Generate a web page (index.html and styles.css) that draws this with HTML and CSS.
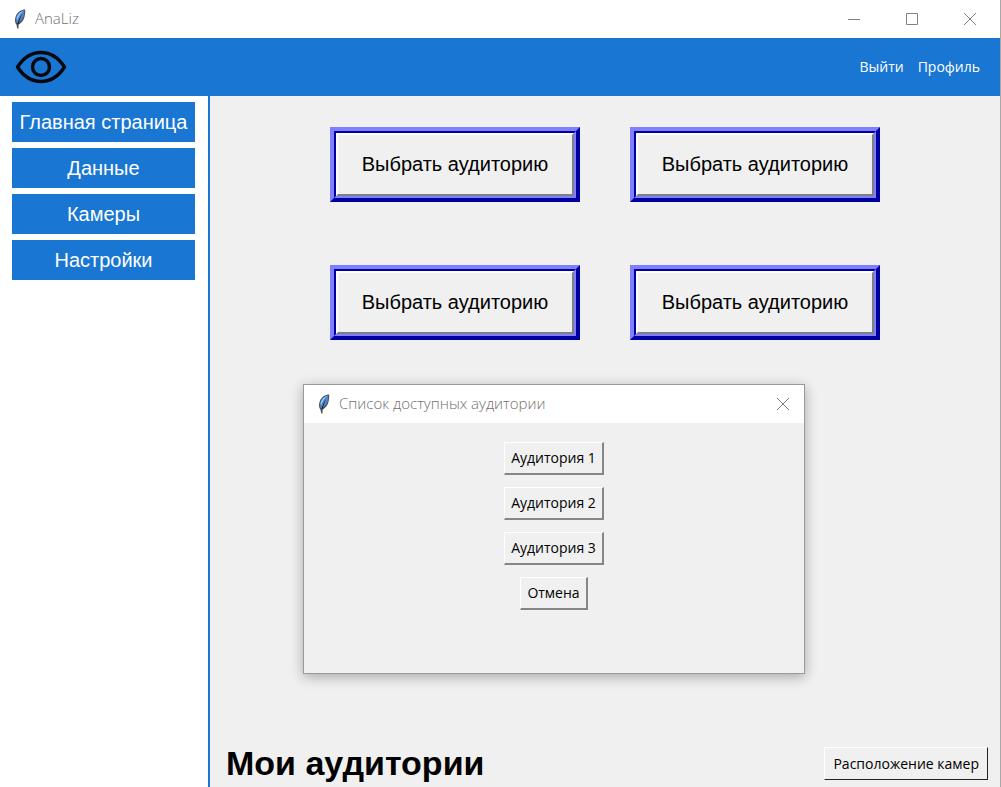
FILE: index.html
```
<!DOCTYPE html>
<html lang="ru">
<head>
<meta charset="utf-8">
<title>AnaLiz</title>
<link rel="stylesheet" href="styles.css">
</head>
<body>
<svg class="defs" aria-hidden="true">
  <symbol id="feather" viewBox="0 0 12 20">
    <path d="M11 0.600C7.500 .6 3.300 3.200 1.700 7.400C.6 10.600 .8 13.300 2.400 15.600L3.300 19.600L4.500 19.600L4.600 15.800C7.800 13.600 9.900 11 10.600 7.500C11 5 11.700 2.600 11 0.600Z" fill="#4a4f55"/>
    <path d="M10.200 1.300C6.500 2 3 5 2.200 8.800C1.900 11 2.200 13 3.200 14.600C7 12.600 9.200 10 9.700 7C10 5 10.500 3 10.200 1.300Z" fill="#4b86cf"/>
    <path d="M9.500 1.800C6.500 2.600 3.500 5.400 2.700 9L3 11.500C4.500 7.500 6.500 4.500 9.500 1.800Z" fill="#9cc3ef"/>
    <path d="M8.200 5C6 8 4.400 11 3.500 15L4.500 15C5.400 11.500 6.600 8.500 8.200 5Z" fill="#15181c"/>
  </symbol>
  <symbol id="cross" viewBox="0 0 12 12">
    <path d="M0 0L12 12M12 0L0 12" fill="none" stroke="#808080"/>
  </symbol>
</svg>
<div class="app">
  <div class="titlebar app-titlebar">
    <svg class="feather"><use href="#feather"/></svg>
    <span class="caption">AnaLiz</span>
    <button class="window-button" aria-label="Свернуть"><svg class="sign" viewBox="0 0 12 12"><path d="M0 6.500H12" stroke="#808080"/></svg></button>
    <button class="window-button" aria-label="Развернуть"><svg class="sign" viewBox="0 0 12 12"><path d="M.5 .5H11.500V11.500H.5Z" fill="none" stroke="#808080"/></svg></button>
    <button class="window-button" aria-label="Закрыть"><svg class="sign"><use href="#cross"/></svg></button>
  </div>
  <header class="header">
    <svg class="eye" viewBox="0 0 52 34" role="img" aria-label="AnaLiz">
      <path d="M2.500 17C8 8.500 16 2.500 26 2.500S44 8.500 49.500 17C44 25.500 36 31.500 26 31.500S8 25.500 2.500 17Z" fill="none" stroke="#05080c" stroke-width="3.400" stroke-linejoin="round"/>
      <circle cx="26" cy="17" r="8.500" fill="none" stroke="#05080c" stroke-width="3.400"/>
    </svg>
    <nav class="account">
      <a href="#exit">Выйти</a>
      <a href="#profile">Профиль</a>
    </nav>
  </header>
  <div class="body">
    <nav class="sidebar">
      <button class="side-button">Главная страница</button>
      <button class="side-button">Данные</button>
      <button class="side-button">Камеры</button>
      <button class="side-button">Настройки</button>
    </nav>
    <main class="main">
      <div class="rooms">
        <button class="room"><span class="ridge"><span class="face">Выбрать аудиторию</span></span></button>
        <button class="room"><span class="ridge"><span class="face">Выбрать аудиторию</span></span></button>
        <button class="room"><span class="ridge"><span class="face">Выбрать аудиторию</span></span></button>
        <button class="room"><span class="ridge"><span class="face">Выбрать аудиторию</span></span></button>
      </div>
      <footer class="footer">
        <h1 class="heading">Мои аудитории</h1>
        <button class="raised cameras">Расположение камер</button>
      </footer>
    </main>
  </div>
</div>
<section class="dialog" role="dialog" aria-labelledby="dialog-title">
  <div class="titlebar">
    <svg class="feather"><use href="#feather"/></svg>
    <span class="caption" id="dialog-title">Список доступных аудитории</span>
    <button class="window-button dialog-close" aria-label="Закрыть"><svg class="sign"><use href="#cross"/></svg></button>
  </div>
  <div class="choices">
    <button class="raised">Аудитория 1</button>
    <button class="raised">Аудитория 2</button>
    <button class="raised">Аудитория 3</button>
    <button class="raised">Отмена</button>
  </div>
</section>
</body>
</html>
```
FILE: styles.css
```
* { box-sizing: border-box; }
body {
  margin: 0;
  background: #f0f0f0;
  color: #000;
  font-family: "Open Sans", "Noto Sans", sans-serif;
  font-size: 14px;
}
button { font: inherit; color: inherit; margin: 0; padding: 0; }
.defs { position: absolute; width: 0; height: 0; }

.app {
  display: flex;
  flex-direction: column;
  min-height: 100vh;
  border-right: 1px solid #a8a8a8;
}
.titlebar {
  display: flex;
  align-items: center;
  height: 38px;
  padding-left: 14px;
  background: #fff;
  color: #707070;
}
.app-titlebar { padding-right: 1px; }
.feather { width: 12px; height: 20px; margin-right: 9px; }
.caption {
  flex: 1;
  padding-bottom: 2px;
  font-size: 15px;
  font-weight: 300;
}
.window-button {
  display: flex;
  align-items: center;
  justify-content: center;
  width: 58px;
  height: 38px;
  border: 0;
  background: none;
}
.sign { width: 12px; height: 12px; }

.header {
  display: flex;
  align-items: center;
  justify-content: space-between;
  height: 58px;
  padding: 0 20px 0 15px;
  background: #1976d2;
}
.eye { width: 52px; height: 34px; }
.account { display: flex; gap: 14px; padding-bottom: 2px; }
.account a { color: #fff; text-decoration: none; }

.body { display: flex; flex: 1; }
.sidebar {
  display: flex;
  flex-direction: column;
  gap: 6px;
  width: 210px;
  padding: 6px 13px 0 12px;
  background: #fff;
  border-right: 2px solid #1976d2;
}
.side-button {
  height: 40px;
  border: 0;
  background: #1976d2;
  color: #fff;
  font-family: "Liberation Sans", Arial, sans-serif;
  font-size: 20px;
}

.main {
  display: flex;
  flex: 1;
  flex-direction: column;
  justify-content: space-between;
  padding-top: 31px;
}
.rooms {
  display: grid;
  grid-template-columns: 250px 250px;
  justify-content: center;
  gap: 63px 50px;
}
.room {
  display: flex;
  height: 75px;
  border: 4px solid;
  border-color: #8080ff #0000a0 #0000a0 #8080ff;
  background: #f0f0f0;
  font-family: "Liberation Sans", Arial, sans-serif;
  font-size: 20px;
}
.ridge {
  display: flex;
  flex: 1;
  align-self: stretch;
  border: 2px solid;
  border-color: #0000a0 #8080ff #8080ff #0000a0;
}
.face {
  display: flex;
  flex: 1;
  align-items: center;
  justify-content: center;
  border: 2px solid;
  border-color: #fff #808080 #808080 #fff;
}
.footer {
  display: flex;
  align-items: center;
  justify-content: space-between;
  height: 48px;
  padding: 0 12px 0 16px;
}
.heading {
  margin: 0;
  font-family: "Liberation Sans", Arial, sans-serif;
  font-size: 34px;
  line-height: 40px;
}
.raised {
  height: 33px;
  padding: 0 6px 2px;
  border: 2px solid;
  border-color: #fff #868686 #868686 #fff;
  border-width: 1px 2px 2px 1px;
  background: #f0f0f0;
}
.cameras {
  padding: 0 8px;
  border-color: #fff #222 #222 #fff;
  border-width: 1px;
}

.dialog {
  position: absolute;
  left: 303px;
  top: 384px;
  width: 502px;
  height: 290px;
  border: 1px solid #999;
  background: #f0f0f0;
  box-shadow: 0 3px 12px rgba(0, 0, 0, 0.3);
}
.dialog-close { width: 42px; }
.choices {
  display: flex;
  flex-direction: column;
  align-items: center;
  gap: 12px;
  padding-top: 19px;
}
```
